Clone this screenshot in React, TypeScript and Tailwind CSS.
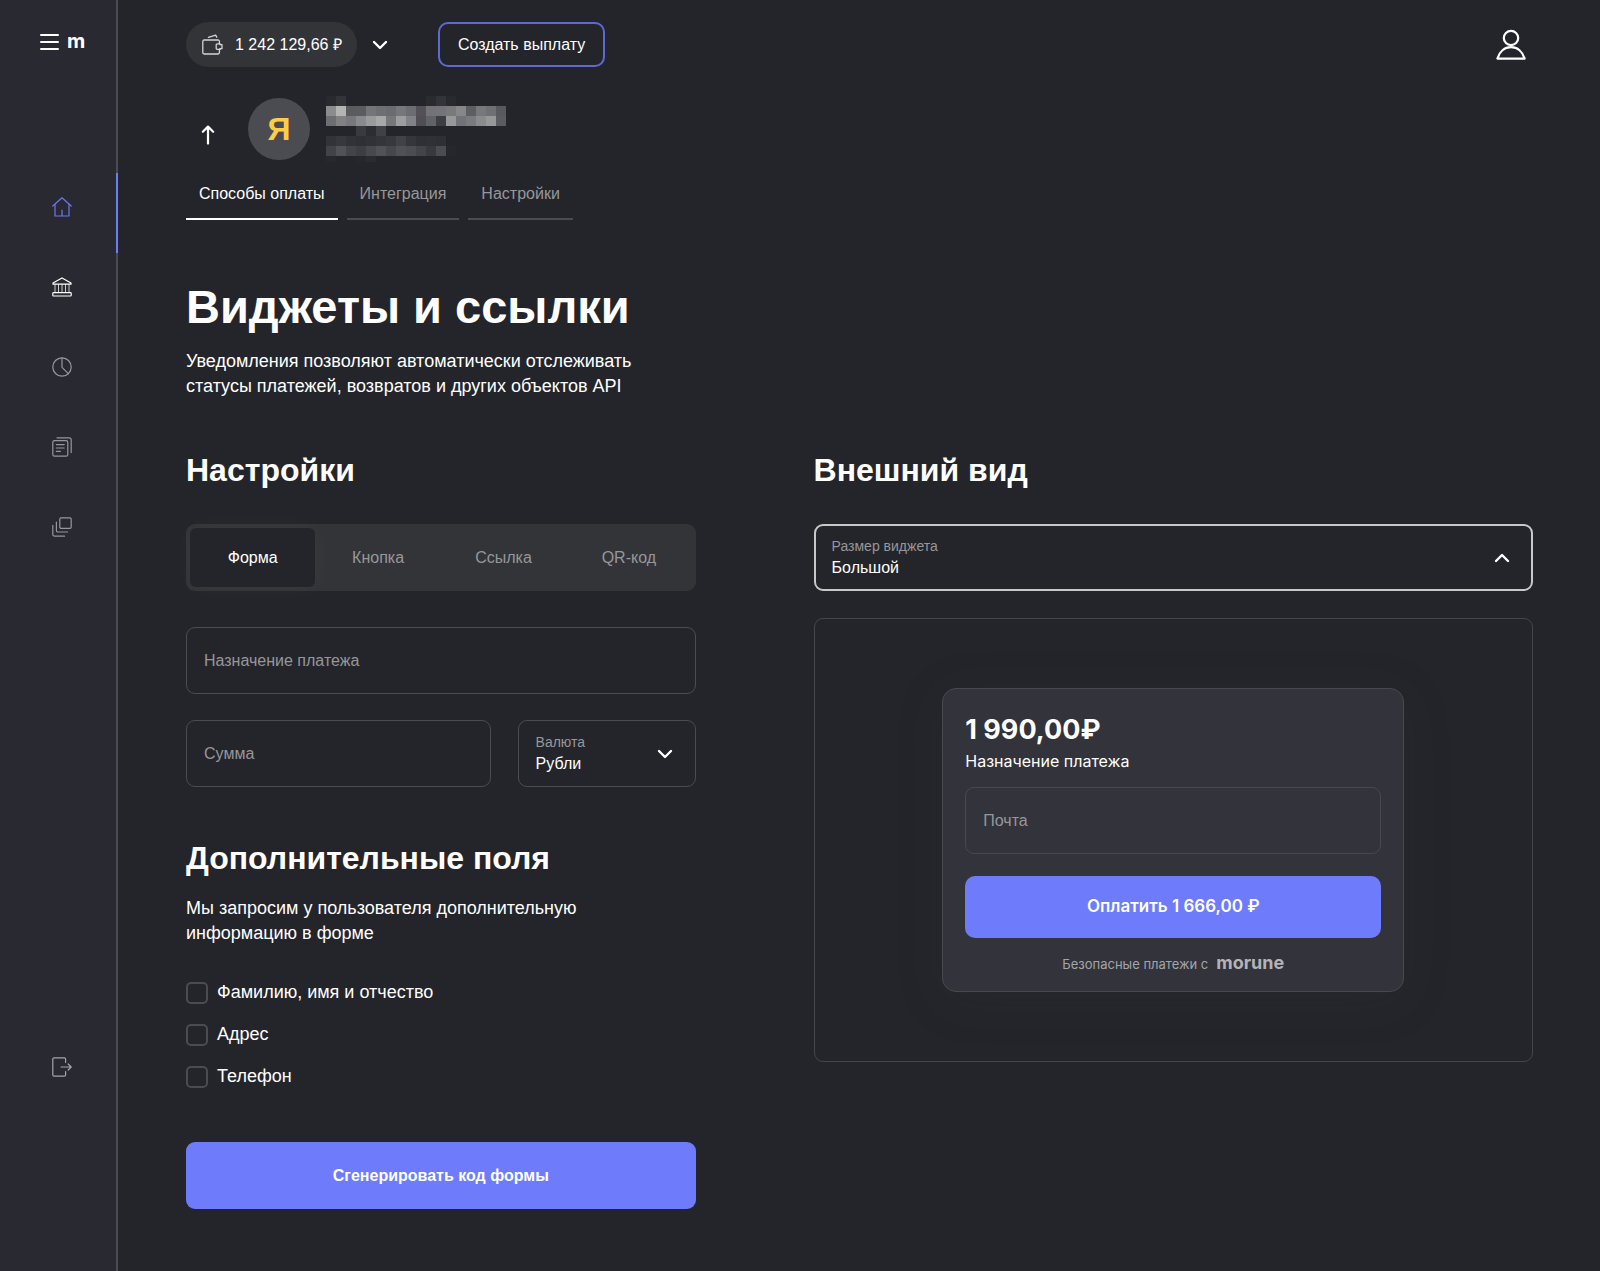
import { useState } from "react";
import type { ReactNode } from "react";

interface IconProps {
  children: ReactNode;
  className?: string;
}

const NavIcon = ({ children, className = "" }: IconProps) => (
  <svg
    viewBox="0 0 20 20"
    className={`h-5 w-5 ${className}`}
    fill="none"
    stroke="currentColor"
    strokeWidth="1.2"
    strokeLinecap="round"
    strokeLinejoin="round"
    aria-hidden="true"
  >
    {children}
  </svg>
);

const Chevron = ({ up = false }: { up?: boolean }) => (
  <svg
    viewBox="0 0 16 10"
    className="h-[10px] w-4 shrink-0"
    fill="none"
    stroke="#fff"
    strokeWidth="2.4"
    strokeLinecap="round"
    strokeLinejoin="round"
    aria-hidden="true"
  >
    <path d={up ? "M2 8L8 2L14 8" : "M2 2L8 8L14 2"} />
  </svg>
);

const navItems = [
  {
    label: "Главная",
    color: "text-[#6878f5]",
    active: true,
    icon: (
      <>
        <path d="M0.8 9L10 0.8L19.2 9" />
        <path d="M3 7.4V19H17V7.4M10 13V19" />
      </>
    ),
  },
  {
    label: "Банк",
    color: "text-white",
    active: false,
    icon: (
      <>
        <path d="M1 7.2V6L10 0.9L19 6V7.2Z" />
        <path d="M3 7.5V15.5M6.5 7.5V15.5M10 7.5V15.5M13.5 7.5V15.5M17 7.5V15.5" strokeWidth="1" opacity="0.75" />
        <rect x="0.8" y="15.6" width="18.4" height="3.4" rx="0.8" />
      </>
    ),
  },
  {
    label: "Статистика",
    color: "text-[#97979b]",
    active: false,
    icon: (
      <>
        <circle cx="10" cy="10" r="9.2" />
        <path d="M10 0.8V10.4L16.4 16.6" />
      </>
    ),
  },
  {
    label: "Документы",
    color: "text-[#97979b]",
    active: false,
    icon: (
      <>
        <rect x="0.8" y="3.6" width="15" height="15.6" rx="1.8" />
        <path d="M5 0.8H17.4A1.8 1.8 0 0 1 19.2 2.6V15.6" />
        <path d="M4.4 7.6H12.2M4.4 11H12.2M4.4 14.4H8.4" />
      </>
    ),
  },
  {
    label: "Проекты",
    color: "text-[#97979b]",
    active: false,
    icon: (
      <>
        <rect x="7.8" y="0.8" width="11.4" height="10.6" rx="1.4" />
        <path d="M4.4 5V13.4A1.6 1.6 0 0 0 6 15H15.6" />
        <path d="M0.8 8.4V17.4A1.8 1.8 0 0 0 2.6 19.2H12.6" />
      </>
    ),
  },
];

// One row per line of 10px blocks, an empty string is left clear
const nameBlocks = [
  ["#292a2f", "#333439", "", "", "", "", "", "", "", "", "#2a2b2f", "#33343a", "#292a2e"],
  ["#8c8c8f", "#b4b4b5", "#5a5b5f", "#5b5c60", "#747579", "#6e6f70", "#6a6b70", "#76777b", "#6c6d72", "#535157", "#737277", "#747377", "#79797d", "#87878a", "#5d5e62", "#78787a", "#6f7074", "#58595e"],
  ["#6d6e72", "#818082", "#78777b", "#8a898e", "#9b9b9e", "#a8a8aa", "#77777a", "#9c9da1", "#818287", "#504e54", "#616267", "#3d3e44", "#98989a", "#727378", "#7b7b7e", "#8a8b8d", "#98989b", "#5b5c61"],
  ["", "", "", "#393a3f", "#2c2d32", "#404146"],
  ["#323338", "#37383d", "#313237", "#2f3035", "#313237", "#34353a", "#37383d", "#414247", "#35363b", "#2f3035", "#303136", "#2e2f34"],
  ["#424348", "#515257", "#434449", "#3d3e43", "#48494e", "#515257", "#46474c", "#505156", "#4c4d52", "#434449", "#38393e", "#4b4c51", "#26272c"],
  ["#27282d", "", "", "#26272c", "#2a2b30"],
];

const projectTabs = ["Способы оплаты", "Интеграция", "Настройки"];
const widgetTypes = ["Форма", "Кнопка", "Ссылка", "QR-код"];
const extraFields = ["Фамилию, имя и отчество", "Адрес", "Телефон"];

const Sidebar = () => (
  <aside className="flex w-[118px] shrink-0 flex-col border-r-2 border-[#4b4c51] bg-[#292932]">
    <div className="flex h-[84px] items-center gap-2 pl-10">
      <button type="button" aria-label="Меню" className="flex w-[19px] flex-col gap-[5px]">
        <span className="h-[2px] rounded-sm bg-white" />
        <span className="h-[2px] rounded-sm bg-white" />
        <span className="h-[2px] rounded-sm bg-white" />
      </button>
      <span className="pb-[2px] font-['Inter',sans-serif] text-[20px] leading-6 font-bold">m</span>
    </div>
    <nav className="mt-[89px] flex flex-col">
      {navItems.map((item) => (
        <a
          key={item.label}
          href="#"
          aria-label={item.label}
          className={`relative flex h-20 items-center justify-center pb-3 pl-2 ${item.color}`}
        >
          <NavIcon>{item.icon}</NavIcon>
          {item.active && <span className="absolute top-0 -right-[2px] h-full w-[2px] bg-[#6e7cfb]" />}
        </a>
      ))}
    </nav>
    <a
      href="#"
      aria-label="Выйти"
      className="mt-auto mb-[158px] flex h-20 items-center justify-center pb-3 pl-2 text-[#a5a5a8]"
    >
      <NavIcon>
        <path d="M13.6 5.4V2A1.2 1.2 0 0 0 12.4 0.8H2A1.2 1.2 0 0 0 0.8 2V18A1.2 1.2 0 0 0 2 19.2H12.4A1.2 1.2 0 0 0 13.6 18V14.6" />
        <path d="M9 10H19.2M16.2 7L19.2 10L16.2 13" />
      </NavIcon>
    </a>
  </aside>
);

const Header = () => (
  <header className="flex items-center">
    <button type="button" className="flex h-[45px] items-center gap-[11px] rounded-full bg-[#333438] pr-[15px] pl-4">
      <svg
        viewBox="0 0 22 22"
        className="h-[22px] w-[22px]"
        fill="none"
        stroke="#d4d4d6"
        strokeWidth="1.3"
        strokeLinecap="round"
        strokeLinejoin="round"
        aria-hidden="true"
      >
        <path d="M17.4 9.6V7.4A1.4 1.4 0 0 0 16 6H2.2A1.4 1.4 0 0 0 0.8 7.4V18.6A1.4 1.4 0 0 0 2.2 20H16A1.4 1.4 0 0 0 17.4 18.6V15.6" />
        <path d="M18.2 10.4V9.8H15.4A1.2 1.2 0 0 0 14.2 11V14.2A1.2 1.2 0 0 0 15.4 15.4H18.2V14.6" />
        <path d="M18 10.6H20V14.6H18M6.4 3.4L13.6 1.2L14.8 3.2" />
      </svg>
      <span className="text-base">1 242 129,66 ₽</span>
    </button>
    <button type="button" aria-label="Показать счета" className="ml-[15px] flex h-8 items-center">
      <Chevron />
    </button>
    <button
      type="button"
      className="ml-[50px] h-[45px] rounded-[10px] border-2 border-[#5d6ad6] px-[18px] text-base"
    >
      Создать выплату
    </button>
    <button type="button" aria-label="Профиль" className="mr-[6px] ml-auto">
      <svg viewBox="0 0 32 32" className="h-8 w-8" fill="none" stroke="#fff" strokeWidth="2.2" strokeLinejoin="round" aria-hidden="true">
        <circle cx="16" cy="9" r="7.2" />
        <path d="M2.4 29.6C4.4 22.6 9.6 18.2 16 18.2C22.4 18.2 27.6 22.6 29.6 29.6Z" />
      </svg>
    </button>
  </header>
);

const ProjectInfo = () => (
  <div className="mt-[31px] flex items-center">
    <a href="#" aria-label="Назад" className="ml-[15px] pt-3">
      <svg
        viewBox="0 0 14 20"
        className="h-5 w-[14px]"
        fill="none"
        stroke="#fff"
        strokeWidth="2.2"
        strokeLinecap="round"
        strokeLinejoin="round"
        aria-hidden="true"
      >
        <path d="M7 18.6V1.6M1.8 6.8L7 1.6L12.2 6.8" />
      </svg>
    </a>
    <div className="ml-[33px] flex h-[62px] w-[62px] items-center justify-center rounded-full bg-[#4b4c51] text-[32px] font-bold text-[#ffcc45]">
      Я
    </div>
    <svg viewBox="0 0 180 66" className="ml-4 h-[66px] w-[180px] -my-[2px]" shapeRendering="crispEdges" aria-hidden="true">
      {nameBlocks.map((row, y) =>
        row.map((fill, x) =>
          fill ? <rect key={`${x}-${y}`} x={x * 10} y={y * 10} width="10" height="10" fill={fill} /> : null,
        ),
      )}
    </svg>
  </div>
);

const WidgetSettings = () => {
  const [type, setType] = useState("Форма");

  return (
    <section>
      <h2 className="text-[32px] leading-10 font-bold">Настройки</h2>
      <div className="mt-[34px] grid h-[67px] grid-cols-4 rounded-[9px] bg-[#333438] p-1">
        {widgetTypes.map((item) => (
          <button
            key={item}
            type="button"
            onClick={() => setType(item)}
            className={`rounded-md text-base ${
              item === type ? "bg-[#24252a] text-white shadow-[0_0_24px_rgba(255,255,255,0.04)]" : "text-[#97979a]"
            }`}
          >
            {item}
          </button>
        ))}
      </div>
      <input
        type="text"
        aria-label="Назначение платежа"
        placeholder="Назначение платежа"
        className="mt-9 h-[67px] w-full rounded-[9px] border border-[#4b4c51] px-[17px] text-base outline-none placeholder:text-[#97979a]"
      />
      <div className="mt-[26px] flex gap-[27px]">
        <input
          type="text"
          aria-label="Сумма"
          placeholder="Сумма"
          className="h-[67px] min-w-0 flex-1 rounded-[9px] border border-[#4b4c51] px-[17px] text-base outline-none placeholder:text-[#97979a]"
        />
        <div className="flex h-[67px] w-[178px] items-center rounded-[9px] border border-[#4b4c51] pr-[22px] pl-[17px]">
          <div className="flex flex-1 flex-col">
            <label htmlFor="currency" className="text-sm leading-5 text-[#97979a]">
              Валюта
            </label>
            <select id="currency" className="appearance-none text-base leading-6 outline-none">
              <option>Рубли</option>
            </select>
          </div>
          <Chevron />
        </div>
      </div>
      <h2 className="mt-[51px] text-[32px] leading-10 font-bold">Дополнительные поля</h2>
      <p className="mt-[18px] max-w-[440px] text-[18px] leading-[25px]">
        Мы запросим у пользователя дополнительную информацию в форме
      </p>
      <div className="mt-[34px] flex flex-col gap-[17px]">
        {extraFields.map((field) => (
          <label key={field} className="flex items-center gap-[9px] text-[18px] leading-[25px]">
            <input
              type="checkbox"
              className="h-[22px] w-[22px] appearance-none rounded-[5px] border-2 border-[#4b4c51] checked:bg-[#6e7cfb]"
            />
            {field}
          </label>
        ))}
      </div>
      <button type="button" className="mt-[53px] h-[67px] w-full rounded-[9px] bg-[#6e7cfb] text-base font-bold">
        Сгенерировать код формы
      </button>
    </section>
  );
};

const WidgetPreview = () => (
  <section>
    <h2 className="text-[32px] leading-10 font-bold">Внешний вид</h2>
    <div className="mt-[34px] flex h-[67px] items-center rounded-[9px] border-2 border-[#c8c8ca] pr-[21px] pl-4">
      <div className="flex flex-1 flex-col">
        <label htmlFor="size" className="text-sm leading-5 text-[#97979a]">
          Размер виджета
        </label>
        <select id="size" className="appearance-none text-base leading-6 outline-none">
          <option>Большой</option>
        </select>
      </div>
      <Chevron up />
    </div>
    <div className="mt-[27px] rounded-[9px] border border-[#45464b] px-6 py-[69px]">
      <form
        onSubmit={(e) => e.preventDefault()}
        className="mx-auto max-w-[462px] rounded-[14px] border border-[#48494e] bg-[#33333b] px-[22px] pt-[22px] pb-[15px] font-['Inter',sans-serif] shadow-[0_8px_48px_rgba(60,60,64,0.15)]"
      >
        <p className="text-[27px] leading-[38px] font-bold">1 990,00₽</p>
        <p className="text-base leading-6">Назначение платежа</p>
        <input
          type="email"
          aria-label="Почта"
          placeholder="Почта"
          className="mt-[14px] h-[67px] w-full rounded-[9px] border border-[#48494e] px-[17px] font-['Liberation_Sans',sans-serif] text-base outline-none placeholder:text-[#97979a]"
        />
        <button type="submit" className="mt-[22px] h-[62px] w-full rounded-[10px] bg-[#6e7cfb] text-[17px] font-semibold">
          Оплатить 1 666,00 ₽
        </button>
        <p className="mt-[14px] flex items-center justify-center gap-2 text-[13px] leading-6 text-[#a5a5a9]">
          Безопасные платежи с
          <span className="pb-[3px] text-[18px] leading-[21px] font-bold text-[#b4b4b7]">morune</span>
        </p>
      </form>
    </div>
  </section>
);

const App = () => {
  const [tab, setTab] = useState("Способы оплаты");

  return (
    <div className="flex min-h-screen bg-[#24252a] font-['Liberation_Sans',sans-serif] text-white">
      <Sidebar />
      <main className="min-w-0 flex-1 pt-[22px] pr-[67px] pb-[62px] pl-[68px]">
        <Header />
        <ProjectInfo />
        <nav className="mt-5 flex gap-[9px]">
          {projectTabs.map((item) => (
            <button
              key={item}
              type="button"
              onClick={() => setTab(item)}
              className={`h-10 border-b-2 px-[13px] pb-[10px] text-base ${
                item === tab ? "border-white text-white" : "border-[#4b4c51] text-[#97979a]"
              }`}
            >
              {item}
            </button>
          ))}
        </nav>
        <h1 className="mt-[57px] text-[47px] leading-[60px] font-bold">Виджеты и ссылки</h1>
        <p className="mt-3 max-w-[480px] text-[18px] leading-[25px]">
          Уведомления позволяют автоматически отслеживать статусы платежей, возвратов и других объектов API
        </p>
        <div className="mt-[51px] grid grid-cols-[17fr_24fr] gap-[118px]">
          <WidgetSettings />
          <WidgetPreview />
        </div>
      </main>
    </div>
  );
};

export default App;
